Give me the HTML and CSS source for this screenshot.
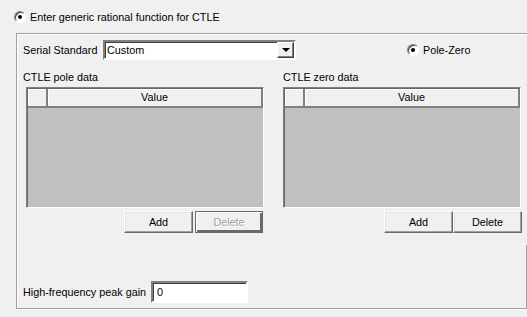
FILE: index.html
```html
<!DOCTYPE html>
<html lang="en">
<head>
  <meta charset="UTF-8">
  <title>CTLE Settings</title>
  <link rel="stylesheet" href="styles.css">
</head>
<body>

  <div class="mode-row">
    <span class="radio checked"></span>
    <span>Enter generic rational function for CTLE</span>
  </div>

  <div class="group">
    <div class="std-row">
      <span class="std-label">Serial Standard</span>
      <div class="combo">
        <span class="combo-text">Custom</span>
        <span class="combo-btn"><span class="arrow"></span></span>
      </div>
      <div class="pole-option">
        <span class="radio checked"></span>
        <span>Pole-Zero</span>
      </div>
    </div>

    <div class="columns">
      <div class="column">
        <div class="col-label first">CTLE pole data</div>
        <div class="grid">
          <div class="grid-head">
            <div class="head-corner"></div>
            <div class="head-value">Value</div>
          </div>
        </div>
        <div class="btn-row">
          <button class="btn">Add</button>
          <button class="btn default" disabled>Delete</button>
        </div>
      </div>

      <div class="column">
        <div class="col-label">CTLE zero data</div>
        <div class="grid">
          <div class="grid-head">
            <div class="head-corner"></div>
            <div class="head-value">Value</div>
          </div>
        </div>
        <div class="btn-row tight">
          <button class="btn">Add</button>
          <button class="btn wide">Delete</button>
        </div>
      </div>
    </div>

    <div class="gain-row">
      <span class="gain-label">High-frequency peak gain</span>
      <div class="field">0</div>
    </div>
  </div>

</body>
</html>
```

FILE: styles.css
```css
* {
  box-sizing: border-box;
}

body {
  margin: 0;
  width: 527px;
  height: 317px;
  overflow: hidden;
  background: #f0f0f0;
  font-family: 'Liberation Sans', Tahoma, sans-serif;
  font-size: 10.8px;
  color: #000;
}

.mode-row {
  height: 33px;
  display: flex;
  align-items: center;
  padding-left: 14px;
  padding-top: 1px;
}

.radio {
  position: relative;
  width: 12px;
  height: 12px;
  border-radius: 50%;
  border: 1px solid;
  border-color: #808080 #fff #fff #808080;
  background: #fff;
  box-shadow: inset 1px 1px 0 #404040;
  margin-right: 4px;
  flex-shrink: 0;
}

.radio.checked::after {
  content: "";
  position: absolute;
  left: 3px;
  top: 3px;
  width: 4px;
  height: 4px;
  border-radius: 50%;
  background: #000;
}

.group {
  position: relative;
  margin-left: 16px;
  width: 512px;
  height: 276px;
  border: 1px solid #a0a0a0;
  border-right: none;
  box-shadow: inset 1px 1px 0 #fff, 0 1px 0 #fff;
  padding: 6px 0 0 6px;
}

.group::after {
  content: "";
  position: absolute;
  right: 1px;
  bottom: -1px;
  width: 1px;
  height: 64px;
  background: #a0a0a0;
}

.std-row {
  display: flex;
  align-items: center;
  height: 20px;
}

.std-label {
  width: 80px;
}

.combo {
  display: flex;
  align-items: center;
  width: 193px;
  height: 20px;
  background: #fff;
  border: 2px solid;
  border-color: #808080 #fff #fff #808080;
  box-shadow: inset 1px 1px 0 #404040;
}

.combo-text {
  flex: 1;
  padding-left: 2px;
}

.combo-btn {
  display: flex;
  align-items: center;
  justify-content: center;
  width: 17px;
  height: 16px;
  background: #f0f0f0;
  border: 1px solid;
  border-color: #fff #404040 #404040 #fff;
  box-shadow: inset -1px -1px 0 #808080;
}

.arrow {
  width: 0;
  height: 0;
  border-left: 4px solid transparent;
  border-right: 4px solid transparent;
  border-top: 4px solid #000;
}

.pole-option {
  display: flex;
  align-items: center;
  margin-left: 111px;
}

.columns {
  display: flex;
  gap: 19px;
  margin-top: 11px;
  margin-left: 3px;
}

.column {
  width: 238px;
}

.col-label {
  height: 13px;
  line-height: 13px;
  margin-bottom: 3px;
}

.col-label.first {
  margin-left: -3px;
}

.grid {
  height: 121px;
  background: #c0c0c0;
  border: 1px solid;
  border-color: #808080 #fff #fff #808080;
  box-shadow: inset 1px 1px 0 #696969;
  padding: 1px 0 0 1px;
}

.grid-head {
  display: flex;
  height: 19px;
}

.head-corner,
.head-value {
  background: #f0f0f0;
  border-right: 2px solid #808080;
  border-bottom: 2px solid #808080;
  box-shadow: inset 1px 1px 0 #fff;
}

.head-corner {
  width: 20px;
}

.head-value {
  flex: 1;
  text-align: center;
  line-height: 17px;
}

.btn-row {
  display: flex;
  justify-content: flex-end;
  gap: 2px;
  margin-top: 3px;
  padding-right: 1px;
}

.btn-row.tight {
  gap: 0;
  padding-right: 0;
  margin-right: -1px;
}

.btn {
  width: 69px;
  height: 22px;
  padding: 0;
  background: #f0f0f0;
  font-family: inherit;
  font-size: 10.8px;
  color: #000;
  border: 1px solid;
  border-color: #fff #696969 #696969 #fff;
  box-shadow: inset -1px -1px 0 #a0a0a0, inset 1px 1px 0 #e3e3e3;
}

.btn.default {
  width: 68px;
  border: 1px solid #696969;
  box-shadow: inset 1px 1px 0 #fff, inset -2px -2px 0 #696969;
}

.btn:disabled {
  color: #a0a0a0;
  text-shadow: 1px 1px 0 #fff;
}

.gain-row {
  display: flex;
  align-items: center;
  margin-top: 48px;
  height: 22px;
}

.gain-label {
  width: 128px;
}

.field {
  width: 97px;
  height: 22px;
  line-height: 18px;
  padding-left: 4px;
  background: #fff;
  border: 2px solid;
  border-color: #808080 #fff #fff #808080;
  box-shadow: inset 1px 1px 0 #404040;
}
```
